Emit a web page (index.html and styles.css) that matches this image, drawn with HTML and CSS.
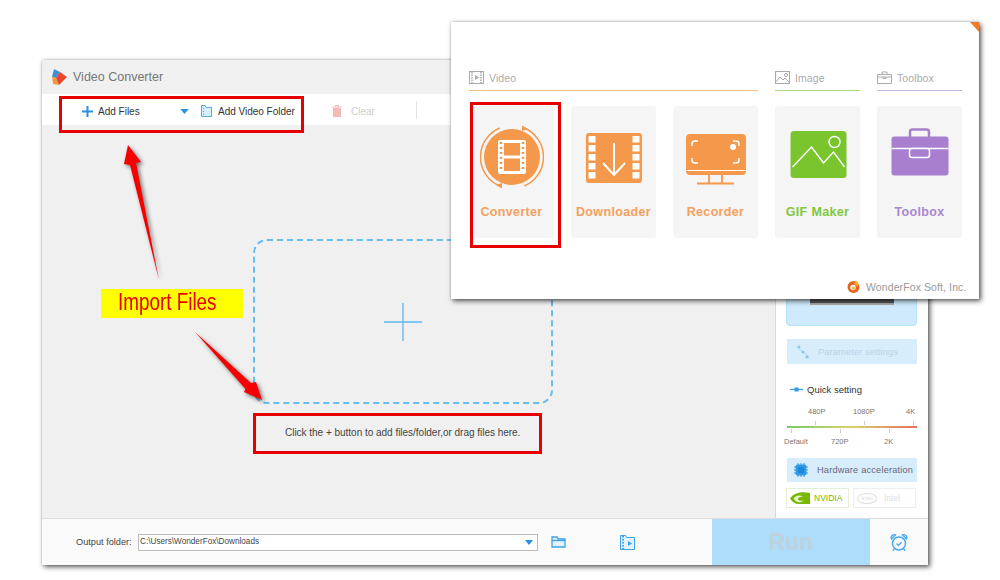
FILE: index.html
```
<!DOCTYPE html>
<html lang="en">
<head>
<meta charset="utf-8">
<title>Video Converter</title>
<link rel="stylesheet" href="styles.css">
</head>
<body>
<div class="desktop">
  <section class="window">
    <header class="titlebar">
      <svg class="app-logo" viewBox="0 0 16 16"><path d="M3 0l6 3-4 6-4-1z" fill="#3f8fd8"/><path d="M1 8l4 1 3 7-6-1z" fill="#f59a3c"/><path d="M9 3l7 5-8 8-3-7z" fill="#e8452f"/></svg>
      <span class="app-title">Video Converter</span>
    </header>
    <div class="toolbar">
      <svg class="tb-plus" viewBox="0 0 12 12"><path d="M6 0v12M0 6h12" stroke="#2d8fe0" stroke-width="2.2"/></svg>
      <span class="tb-text tb-add">Add Files</span>
      <svg class="tb-caret" viewBox="0 0 10 6"><path d="M0 0h10L5 6z" fill="#2d8fe0"/></svg>
      <svg class="tb-folder" viewBox="0 0 12 13"><path d="M.5.5h4l1 2h6v10H.5z" fill="#d8effd" stroke="#3ea2e8"/><path d="M2 4h1.500M2 7h1.500M2 10h1.500" stroke="#3ea2e8"/></svg>
      <span class="tb-text tb-folder-label">Add Video Folder</span>
      <svg class="tb-trash" viewBox="0 0 10 12"><path d="M0 2h10M3.500 2V.5h3V2" stroke="#f2b9b5" fill="none"/><path d="M1 3h8v9H1z" fill="#f2b9b5"/></svg>
      <span class="tb-text tb-clear">Clear</span>
      <span class="tb-sep"></span>
    </div>
    <div class="body">
      <main class="workspace">
        <div class="dropzone">
          <svg class="drop-plus" viewBox="0 0 38 38"><path d="M19 0v38M0 19h38" stroke="#5cb8ee" stroke-width="1.300"/></svg>
        </div>
        <p class="hint">Click the + button to add files/folder,or drag files here.</p>
      </main>
      <aside class="sidebar">
        <div class="preview"><div class="preview-img"></div></div>
        <div class="param">
          <svg class="param-icon" viewBox="0 0 14 14"><path d="M1 2l12 10" stroke="#a9d6f3"/><circle cx="3" cy="2" r="1.600" fill="#8cc8ee"/><circle cx="7" cy="7" r="1.600" fill="#8cc8ee"/><circle cx="11" cy="12" r="1.600" fill="#8cc8ee"/></svg>
          <span class="param-text">Parameter settings</span>
        </div>
        <div class="quick">
          <svg class="quick-icon" viewBox="0 0 13 5"><path d="M0 2.500h13" stroke="#2d9be8" stroke-width="1.200"/><rect x="4.500" y=".5" width="4" height="4" fill="#2d9be8"/></svg>
          <span>Quick setting</span>
        </div>
        <div class="scale scale-top"><span>480P</span><span>1080P</span><span>4K</span></div>
        <div class="ticks ticks-top"><i></i><i></i><i></i></div>
        <div class="gradient"></div>
        <div class="ticks ticks-bottom"><i></i><i></i><i></i></div>
        <div class="scale scale-bottom"><span>Default</span><span>720P</span><span>2K</span></div>
        <div class="hw">
          <svg class="hw-icon" viewBox="0 0 14 14"><path d="M4 0v14M7 0v14M10 0v14M0 4h14M0 7h14M0 10h14" stroke="#2d9be8"/><rect x="1.500" y="1.500" width="11" height="11" rx="2" fill="#2d9be8"/><rect x="4" y="4" width="6" height="6" fill="#1f86d8"/></svg>
          <span>Hardware acceleration</span>
        </div>
        <div class="gpus">
          <div class="gpu gpu-on">
            <svg class="nv-icon" viewBox="0 0 20 13"><path d="M0 6.500C4 1 10-1 20 1v11H9C5 12 2 10 0 6.500z" fill="#76b900"/><path d="M3.500 6.500C6 3.500 9.500 2.500 13 4.500 10.500 4.700 8.500 5.500 7.500 7 9 9 11 9.200 14 8.500 10 11.500 6 10.500 3.500 6.500z" fill="#e9f5cf"/></svg>
            <span>NVIDIA</span>
          </div>
          <div class="gpu gpu-off">
            <span class="intel-mark">intel</span>
            <span>Intel</span>
          </div>
        </div>
      </aside>
    </div>
    <footer class="footer">
      <span class="out-label">Output folder:</span>
      <div class="out-input">
        <span>C:\Users\WonderFox\Downloads</span>
        <svg class="out-caret" viewBox="0 0 8 5"><path d="M0 0h8L4 5z" fill="#2d8fe0"/></svg>
      </div>
      <svg class="out-open" viewBox="0 0 16 12"><path d="M1 11V1h5l1 2h7v8z" fill="#e3f3fe" stroke="#3ea2e8" stroke-width="1.300"/><path d="M1 4.500h13.500" stroke="#3ea2e8" stroke-width="1.300"/></svg>
      <svg class="out-video" viewBox="0 0 15 15"><path d="M.5.5h5l1 2h8v12H.5z" fill="#e3f3fe" stroke="#3ea2e8"/><path d="M3 1v13" stroke="#3ea2e8" stroke-width="2" stroke-dasharray="1.500 1.500"/><path d="M8 6l4 2.500L8 11z" fill="#3ea2e8"/></svg>
      <button class="run">Run</button>
      <div class="alarm">
        <svg viewBox="0 0 18 19"><circle cx="9" cy="10.500" r="6.500" fill="none" stroke="#49aaf0" stroke-width="1.500"/><path d="M1.500 6A3 3 0 0 1 5.500 2zM16.500 6A3 3 0 0 0 12.500 2zM4.500 15.500L3 18M13.500 15.500L15 18" fill="none" stroke="#49aaf0" stroke-width="1.400"/><path d="M6.500 10.500L8.500 12.500 11.500 9" fill="none" stroke="#49aaf0" stroke-width="1.200"/></svg>
      </div>
    </footer>
  </section>

  <svg class="arrows" viewBox="0 0 1000 580">
    <path class="arrow" d="M128 145L141 162 136 163 159 280 130 165 124 164z"/>
    <path class="arrow" d="M195 332L251 383 256 382 262 400 244 392 245.500 389z"/>
  </svg>
  <div class="mark mark-tools"></div>
  <div class="mark mark-hint"></div>
  <div class="callout"><span class="callout-text">Import Files</span></div>

  <section class="launcher">
    <span class="corner"></span>
    <div class="launch-grid">
      <div class="head head-video">
        <svg viewBox="0 0 15 13"><rect x=".5" y=".5" width="14" height="12" fill="none" stroke="#aaa"/><path d="M3 1v11M12 1v11" stroke="#aaa" stroke-width="1.500" stroke-dasharray="1.500 1"/><path d="M6 4l4 2.500L6 9z" fill="#aaa"/></svg>
        <span>Video</span>
      </div>
      <div class="head head-image">
        <svg viewBox="0 0 15 13"><rect x=".5" y=".5" width="14" height="12" fill="none" stroke="#aaa"/><path d="M1 11l4-5 3 3 2-2 4 4" fill="none" stroke="#aaa"/><circle cx="11" cy="4" r="1.500" fill="none" stroke="#aaa"/></svg>
        <span>Image</span>
      </div>
      <div class="head head-tool">
        <svg viewBox="0 0 15 13"><path d="M.5 3.500h14v9H.5zM5 3.500V1h5v2.500M.5 6h14M6 6v1.500h3V6" fill="none" stroke="#aaa"/></svg>
        <span>Toolbox</span>
      </div>

      <div class="card c-orange">
        <svg class="card-icon" viewBox="0 0 64 64">
          <circle cx="32" cy="32" r="28" fill="#f4984c"/>
          <path d="M19.700 3A31.500 31.500 0 0 0 19.700 61M44.300 3A31.500 31.500 0 0 1 44.300 61" fill="none" stroke="#f4984c" stroke-width="1.500"/>
          <path d="M42 .5L48 4 42 6zM22 63.500L16 60 22 58z" fill="#f4984c"/>
          <rect x="18" y="15" width="28" height="34" rx="2" fill="#fff"/>
          <rect x="24" y="18" width="16" height="12.500" fill="#f4984c"/>
          <rect x="24" y="33.500" width="16" height="12.500" fill="#f4984c"/>
          <path d="M21 17v30M43 17v30" stroke="#f4984c" stroke-width="2.500" stroke-dasharray="2 3"/>
        </svg>
        <span class="card-label">Converter</span>
      </div>
      <div class="card c-orange">
        <svg class="card-icon" viewBox="0 0 64 64">
          <rect x="4" y="8" width="56" height="50" rx="3" fill="#f4984c"/>
          <path d="M10 11v44M54 11v44" stroke="#fff" stroke-width="7" stroke-dasharray="6.500 2.500"/>
          <path d="M32 18v32M21 38l11 12 11-12" fill="none" stroke="#fff" stroke-width="2"/>
        </svg>
        <span class="card-label">Downloader</span>
      </div>
      <div class="card c-orange">
        <svg class="card-icon" viewBox="0 0 64 64">
          <rect x="2" y="9" width="60" height="41" rx="4" fill="#f4984c"/>
          <path d="M2 45.500h60" stroke="#fff" stroke-width="1.200"/>
          <path d="M14 16h-3a3 3 0 0 0-3 3v2M8 33v2a3 3 0 0 0 3 3h3M55 33v2a3 3 0 0 1-3 3h-3M49 16h3a3 3 0 0 1 3 3v2" fill="none" stroke="#fff" stroke-width="1.500"/>
          <circle cx="49" cy="22" r="3" fill="#fff"/>
          <path d="M25 50v8M38 50v8M13 58.500h37" stroke="#f4984c" stroke-width="1.800"/>
        </svg>
        <span class="card-label">Recorder</span>
      </div>
      <div class="card c-green">
        <svg class="card-icon" viewBox="0 0 64 64">
          <rect x="4.500" y="6" width="56" height="47" rx="3.500" fill="#7ac52e"/>
          <path d="M6.500 42l19-20 12 16 10-11 11 15" fill="none" stroke="#fff" stroke-width="1.400"/>
          <circle cx="48.500" cy="17" r="5.500" fill="#7ac52e" stroke="#fff" stroke-width="1.400"/>
        </svg>
        <span class="card-label">GIF Maker</span>
      </div>
      <div class="card c-purple">
        <svg class="card-icon" viewBox="0 0 64 64">
          <path d="M22 12V7a2.500 2.500 0 0 1 2.500-2.500h14A2.500 2.500 0 0 1 41 7v5" fill="none" stroke="#a87fcf" stroke-width="2.500"/>
          <rect x="3.500" y="11.500" width="57" height="39" rx="3" fill="#a87fcf"/>
          <path d="M3.500 23.500h57" stroke="#fff" stroke-width="1.500"/>
          <rect x="21.500" y="23.500" width="20" height="9" rx="2.500" fill="#a87fcf" stroke="#fff" stroke-width="1.500"/>
        </svg>
        <span class="card-label">Toolbox</span>
      </div>
    </div>
    <div class="brand">
      <svg viewBox="0 0 13 13"><circle cx="6.500" cy="7" r="6" fill="#e8641e"/><path d="M9 .5c2 2 3 4 2 6L7 4z" fill="#f6b02c"/><circle cx="6" cy="7.500" r="2.700" fill="#fff"/><circle cx="6.500" cy="8" r="1.500" fill="#f6b02c"/></svg>
      <span>WonderFox Soft, Inc.</span>
    </div>
  </section>
  <div class="mark mark-converter"></div>
</div>
</body>
</html>
```
FILE: styles.css
```
* { box-sizing: border-box; }
html, body { margin: 0; padding: 0; background: #fff; }
body { font-family: "Liberation Sans", Arial, sans-serif; color: #333; }
svg { display: block; flex: none; }

.desktop { position: relative; width: 1000px; height: 580px; overflow: hidden; }

/* app window */
.window {
  position: absolute; left: 42px; top: 60px; width: 886px; height: 505px;
  display: flex; flex-direction: column; background: #f0f0f0;
  box-shadow: 2px 2px 5px rgba(0,0,0,.65), 0 0 2px rgba(0,0,0,.2);
}
.titlebar { height: 34px; display: flex; align-items: center; padding-left: 9px; background: #f0f0f0; }
.app-logo { width: 16px; height: 16px; }
.app-title { margin-left: 6px; font-size: 12.5px; color: #777; }

.toolbar { height: 31px; display: flex; align-items: center; background: #fff; padding-top: 3px; }
.tb-plus { width: 11px; height: 11px; margin-left: 40px; }
.tb-text { font-size: 10px; color: #333; }
.tb-add { margin-left: 5px; width: 82px; }
.tb-caret { width: 9px; height: 5px; margin-left: 0; }
.tb-folder { width: 11px; height: 12px; margin-left: 12px; }
.tb-folder-label { margin-left: 6px; width: 114px; letter-spacing: -.02px; }
.tb-trash { width: 10px; height: 12px; }
.tb-clear { margin-left: 9px; color: #ccc; width: 65px; }
.tb-sep { width: 1px; height: 18px; background: #e4e4e4; margin-top: -3px; }

.body { flex: 1; display: flex; min-height: 0; }
.workspace { width: 733px; background: #f0f0f0; padding: 114px 0 0 211px; }
.dropzone {
  width: 300px; height: 165px; border: 2px dashed #66bdf0; border-radius: 14px;
  display: flex; align-items: center; justify-content: center;
}
.drop-plus { width: 38px; height: 38px; }
.hint { margin: 23px 0 0 32px; font-size: 10px; line-height: 12px; letter-spacing: -.02px; color: #444; }

/* sidebar */
.sidebar { flex: 1; background: #fff; border-left: 1px solid #d9d9d9; padding: 10px 0 0 10px; font-size: 9px; }
.preview {
  width: 131px; height: 191px; background: #cfeafc; border: 1px solid #b5e4fa; border-radius: 4px;
  display: flex; flex-direction: column; justify-content: flex-end; align-items: center; padding-bottom: 20px;
}
.preview-img { width: 84px; height: 40px; background: #555; border-bottom: 2px solid #aaa; }
.param {
  width: 130px; height: 25px; margin: 13px 0 0 1px; background: #d8edfb;
  display: flex; align-items: center; padding-left: 9px; color: #b9d3e6;
}
.param-icon { width: 14px; height: 14px; }
.param-text { margin-left: 8px; font-size: 9.5px; }
.quick { display: flex; align-items: center; margin: 19px 0 0 4px; height: 12px; font-size: 9.500px; color: #333; }
.quick-icon { width: 13px; height: 5px; margin-right: 4px; }
.scale { display: grid; font-size: 7.500px; line-height: 9px; color: #777; }
.scale-top { grid-template-columns: 45px 53px auto; margin: 12px 0 0 22px; }
.scale-bottom { grid-template-columns: 47px 53px auto; margin: 4px 0 0 -2px; }
.ticks { display: flex; gap: 48px; height: 4px; margin-top: 1px; }
.ticks i { width: 1px; height: 4px; background: #ccc; }
.ticks-top { margin-left: 29px; margin-top: 5px; }
.ticks-bottom { margin-left: 5px; }
.gradient { width: 130px; height: 2px; margin: 1px 0 1px 1px; background: linear-gradient(90deg, #7cc96a, #d9d36a 50%, #e5705c); }
.hw {
  width: 130px; height: 24px; margin: 12px 0 0 1px; background: #d8edfb;
  display: flex; align-items: center; padding-left: 7px; font-size: 9.200px; letter-spacing: .2px; color: #667;
}
.hw-icon { width: 14px; height: 14px; margin-right: 9px; }
.gpus { display: flex; gap: 4px; margin-top: 6px; }
.gpu { width: 63px; height: 20px; display: flex; align-items: center; border: 1px solid #eee; font-size: 8.500px; }
.gpu-on { padding-left: 3px; color: #76b900; border-color: #e4eed8; }
.nv-icon { width: 20px; height: 13px; margin-right: 4px; }
.gpu-off { padding-left: 3px; color: #ddd; }
.intel-mark { width: 20px; height: 11px; margin-right: 7px; border: 1px solid #ddd; border-radius: 50%; font-size: 6px; line-height: 9px; text-align: center; }

/* footer */
.footer { height: 47px; display: flex; align-items: center; background: #fafafa; border-top: 1px solid #ddd; }
.out-label { margin-left: 34px; font-size: 9.200px; color: #444; width: 62px; }
.out-input {
  width: 400px; height: 17px; background: #fff; border: 1px solid #bbb;
  display: flex; align-items: center; justify-content: space-between; padding: 0 4px 2px 1px; font-size: 8.200px; color: #444;
}
.out-caret { width: 8px; height: 5px; margin-top: 2px; }
.out-open { width: 16px; height: 12px; margin-left: 13px; }
.out-video { width: 15px; height: 15px; margin-left: 53px; }
.run {
  align-self: stretch; width: 158px; margin-left: 77px; border: 0; padding: 0; background: #aedcfb;
  font: bold 23px "Liberation Sans", Arial, sans-serif; color: #bfd2de;
}
.alarm { flex: 1; display: flex; align-items: center; justify-content: center; }
.alarm svg { width: 18px; height: 19px; }

/* annotations */
.arrows { position: absolute; left: 0; top: 0; width: 1000px; height: 580px; }
.arrow { fill: #f80000; filter: drop-shadow(2px 2px 2px rgba(0,0,0,.55)); }
.mark { position: absolute; border: 3px solid #e60000; }
.mark-tools { left: 59px; top: 96px; width: 245px; height: 37px; }
.mark-hint { left: 253px; top: 413px; width: 289px; height: 41px; }
.mark-converter { left: 470px; top: 102px; width: 91px; height: 146px; }
.callout {
  position: absolute; left: 101px; top: 289px; width: 142px; height: 29px; background: #ffff00;
  padding-left: 17px; font-size: 23px; line-height: 26px; color: #e60000;
}
.callout-text { display: inline-block; transform: scaleX(.82); transform-origin: left center; }

/* launcher popup */
.launcher {
  position: absolute; left: 451px; top: 22px; width: 528px; height: 277px; background: #fff;
  padding: 49px 0 0 18px; box-shadow: 2px 2px 5px rgba(0,0,0,.65), 0 0 2px rgba(0,0,0,.25);
}
.corner { position: absolute; right: 0; top: 0; width: 0; height: 0; border-style: solid; border-width: 0 9px 10px 0; border-color: transparent #f07a2c transparent transparent; }
.launch-grid { display: grid; grid-template-columns: repeat(5, 85px); column-gap: 17px; row-gap: 15px; }
.head { height: 20px; display: flex; align-items: flex-start; font-size: 10.500px; color: #aaa; border-bottom: 1px solid; }
.head svg { width: 15px; height: 13px; margin-right: 5px; }
.head span { line-height: 13px; margin-top: 1px; letter-spacing: .1px; }
.head-video { grid-column: span 3; border-color: #f4c08e; }
.head-image { border-color: #a9d97a; }
.head-tool { border-color: #c8b6e4; }
.card { height: 132px; background: #f5f5f5; border-radius: 3px; display: flex; flex-direction: column; align-items: center; padding-top: 19px; }
.card-icon { width: 64px; height: 64px; }
.card-label { margin-top: 16px; font-size: 12.500px; line-height: 14px; font-weight: bold; letter-spacing: .35px; }
.c-orange .card-label { color: #f4a060; }
.c-green .card-label { color: #7fc83a; }
.c-purple .card-label { color: #a987d2; }
.brand { position: absolute; left: 396px; top: 258px; display: flex; align-items: center; font-size: 10.500px; color: #999; letter-spacing: .1px; }
.brand svg { width: 13px; height: 13px; margin-right: 6px; }
```
